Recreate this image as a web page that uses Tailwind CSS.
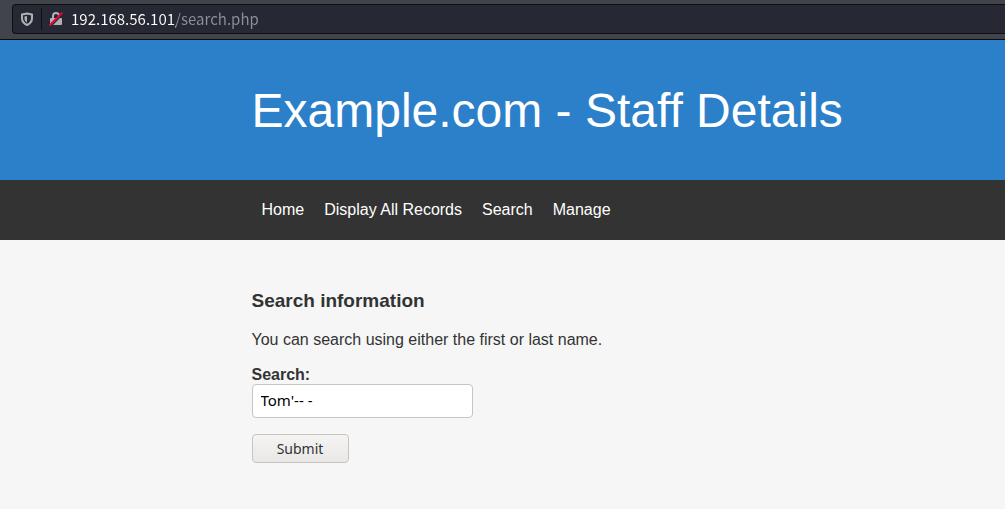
<!DOCTYPE html>
<html lang="en"><head><meta charset="utf-8"><title>Staff Details</title>
<script src="https://cdn.jsdelivr.net/npm/@tailwindcss/browser@4"></script></head>
<body class="min-h-screen bg-[#f6f6f6] font-['Liberation_Sans',sans-serif] text-base text-[#333]">
<div class="h-10 border-b border-[#0c0c0d] bg-[#42444b] pt-1 pl-3">
<div class="flex h-[30px] items-center rounded-l border border-r-0 border-[#0f1012] bg-[#262833] pl-1.5">
<svg class="size-4 shrink-0" viewBox="0 0 16 16"><path d="M8 2.500 13 3.500v4c0 3-2 5-5 6.500C5 12.500 3 10.500 3 7.500v-4z" fill="none" stroke="#b0b1b5" stroke-width="2" stroke-linejoin="round"/><path d="M8 5v6.500C6.500 10.500 5.500 9.500 5.500 7.500V5.500z" fill="#b0b1b5"/></svg>
<span class="mr-1.5 ml-1.5 h-[22px] w-px bg-[#0f1012]"></span>
<svg class="size-4 shrink-0" viewBox="0 0 16 16" fill="none"><path d="M5 8V5a3 3 0 0 1 6 0v3" stroke="#b0b1b5" stroke-width="2"/><rect x="2" y="7" width="12" height="7" rx="1" fill="#b0b1b5"/><path d="M2.500 15.500 15.500 2.500" stroke="#262833" stroke-width="1.500"/><path d="M1.500 14.500 14.500 1.500" stroke="#e8003d" stroke-width="2"/></svg>
<input id="url" aria-label="Address" value="192.168.56.101/search.php" class="ml-[7px] min-w-0 flex-1 bg-linear-to-r from-white from-[105px] to-[#8f9096] to-[105px] bg-clip-text font-['Noto_Sans_CJK_SC',sans-serif] text-[15px] text-transparent outline-none">
</div></div>
<header class="bg-[#2c80c9] pt-[41px] pb-[39px] text-white"><h1 class="mx-auto w-[502px] text-5xl leading-[60px] whitespace-nowrap">Example.com - Staff Details</h1></header>
<nav class="bg-[#333] text-white"><div class="mx-auto flex h-[60px] w-[502px] items-center gap-5 pl-[10px] whitespace-nowrap"><a href="#">Home</a><a href="#">Display All Records</a><a href="#">Search</a><a href="#">Manage</a></div></nav>
<main class="mx-auto w-[502px] pt-12">
<h2 class="pt-px text-[19px] leading-6 font-bold">Search information</h2>
<p class="mt-[15px] leading-6">You can search using either the first or last name.</p>
<form class="mt-[13px]"><label for="q" class="block leading-[19px] font-bold">Search:</label>
<input id="q" value="Tom'-- -" class="block h-[34px] w-[221px] rounded border border-[#c8c4bf] bg-white px-2 pb-0.5 font-['Noto_Sans',sans-serif] text-[15px] text-black">
<button class="mt-4 h-[29px] w-[97px] rounded border border-[#c8c4bf] bg-linear-to-b from-[#f5f4f3] to-[#e9e8e6] font-['Noto_Sans',sans-serif] text-sm">Submit</button></form></main>
</body></html>
